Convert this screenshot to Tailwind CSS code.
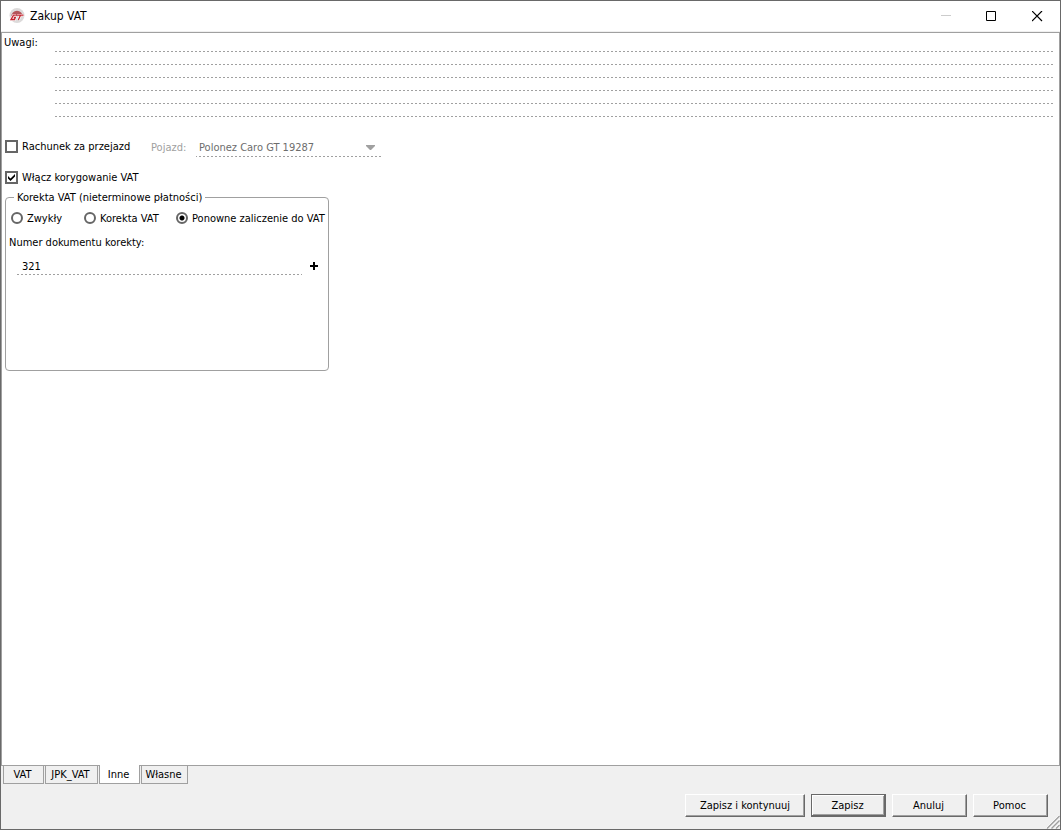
<!DOCTYPE html>
<html lang="pl">
<head>
  <meta charset="UTF-8" />
  <meta name="viewport" content="width=device-width, initial-scale=1.0"/>
  <title>Zakup VAT</title>
  <script src="https://cdn.jsdelivr.net/npm/@tailwindcss/browser@4"></script>
</head>
<body class="min-h-screen flex flex-col border border-[#696969] bg-[#f0f0f0] font-['Tahoma','DejaVu_Sans_Condensed','Roboto',sans-serif] text-[11px] leading-4 text-black">
  <!-- Title bar -->
  <header class="flex h-[30px] items-center bg-white pl-2">
    <svg class="size-4" viewBox="0 0 16 16" aria-hidden="true">
      <circle cx="8" cy="7.500" r="7.500" fill="#dcdada"/>
      <path d="M2.200 8.500a5.800 5.800 0 0 1 11.600 0z" fill="#b5555a"/>
      <path d="M6.800 7.200H4.500L2 11.500H5.500L6.300 9.500H4.800M8 7.200H14.500M11.500 7.200L9.300 12" fill="none" stroke="#fff" stroke-width="2.600"/>
      <path d="M6.800 7.200H4.500L2 11.500H5.500L6.300 9.500H4.800M8 7.200H14.500M11.500 7.200L9.300 12" fill="none" stroke="#c4242f" stroke-width="1.300"/>
    </svg>
    <h1 class="ml-[5px] flex-1 text-xs">Zakup VAT</h1>
    <button class="flex h-full w-[46px] items-center justify-center" aria-label="Minimalizuj" disabled>
      <svg class="size-[11px]" viewBox="0 0 11 11" stroke="#ccc"><path d="M1 4.500H11"/></svg>
    </button>
    <button class="flex h-full w-[46px] items-center justify-center" aria-label="Maksymalizuj">
      <svg class="size-[11px]" viewBox="0 0 11 11" fill="none" stroke="#000"><path d="M.5.5H9.500V9.500H.5z"/></svg>
    </button>
    <button class="flex h-full w-[46px] items-center justify-center" aria-label="Zamknij">
      <svg class="size-[11px]" viewBox="0 0 11 11" stroke="#000" stroke-width="1.200"><path d="M0 0l10 10M10 0l-10 10"/></svg>
    </button>
  </header>

  <!-- Tab page -->
  <main class="mt-px flex-1 border border-[#a0a0a0] bg-white pt-[3px]">
    <div class="flex pt-[3px] pr-[5px] pl-[2px]">
      <label for="uwagi" class="-mt-1 w-[51px]">Uwagi:</label>
      <textarea id="uwagi" rows="6" class="h-[78px] flex-1 resize-none bg-[linear-gradient(#fff_12px,transparent_12px),linear-gradient(90deg,#a0a0a0_2px,transparent_2px)] bg-size-[4px_13px] leading-[13px] outline-none"></textarea>
    </div>

    <div class="mt-[22px] flex h-[18px] items-start pl-[3px]">
      <label class="flex w-[146px] items-start gap-1">
        <input type="checkbox" class="mt-px size-[13px] appearance-none border-2 border-[#666] bg-white"/>
        Rachunek za przejazd
      </label>
      <label for="pojazd" class="w-[45px] pt-px text-[#a0a0a0]">Pojazd:</label>
      <div class="relative">
        <select id="pojazd" disabled class="h-[18px] w-[186px] appearance-none bg-[linear-gradient(90deg,#a0a0a0_2px,transparent_2px)] bg-size-[4px_1px] bg-bottom bg-repeat-x pl-[3px] text-[#6d6d6d] opacity-100">
          <option>Polonez Caro GT 19287</option>
        </select>
        <svg class="pointer-events-none absolute top-[6px] right-[7px] h-[5px] w-[9px]" viewBox="0 0 9 5" fill="#a0a0a0"><path d="M0 0H9V1L5 5H4L0 1z"/></svg>
      </div>
    </div>

    <label class="mt-[13px] ml-[3px] flex w-fit items-start gap-1">
      <span class="relative mt-px flex">
        <input type="checkbox" checked class="peer size-[13px] appearance-none border-2 border-[#666] bg-white"/>
        <svg class="pointer-events-none absolute top-[2px] left-[2px] hidden size-[9px] peer-checked:block" viewBox="0 0 9 9" fill="#000"><path d="M1 3l2.500 2.500L8 1v2.500L3.500 8 1 5.500z"/></svg>
      </span>
      Włącz korygowanie VAT
    </label>

    <fieldset class="mt-[2px] ml-[3px] h-[183px] w-[324px] min-w-0 rounded-[4px] border border-[#a0a0a0]">
      <legend class="ml-2 px-[3px] pt-[2px]">Korekta VAT (nieterminowe płatności)</legend>
      <div class="mt-[5px] flex pl-[5px]">
        <label class="flex w-[73px] shrink-0 items-start gap-1">
          <input type="radio" name="korekta" class="mt-px size-3 appearance-none rounded-full border-2 border-[#666] bg-white"/>
          Zwykły
        </label>
        <label class="flex w-[92px] shrink-0 items-start gap-1">
          <input type="radio" name="korekta" class="mt-px size-3 appearance-none rounded-full border-2 border-[#666] bg-white"/>
          Korekta VAT
        </label>
        <label class="flex items-start gap-1 whitespace-nowrap">
          <input type="radio" name="korekta" checked class="mt-px size-3 appearance-none rounded-full border-2 border-[#666] bg-white checked:bg-[radial-gradient(circle,#000_2px,transparent_3px)]"/>
          Ponowne zaliczenie do VAT
        </label>
      </div>
      <label for="numer" class="mt-2 ml-[3px] block">Numer dokumentu korekty:</label>
      <div class="mt-[6px] ml-[10px] flex items-start">
        <input id="numer" type="text" value="321" class="h-[18px] w-[286px] bg-[linear-gradient(90deg,#a0a0a0_2px,transparent_2px)] bg-size-[4px_1px] bg-bottom bg-repeat-x pl-[6px] outline-none"/>
        <button class="ml-2 flex h-[18px] w-2 items-center" aria-label="Dodaj">
          <svg class="size-2" viewBox="0 0 8 8" fill="#000"><path d="M3 0h2v3h3v2H5v3H3V5H0V3h3z"/></svg>
        </button>
      </div>
    </fieldset>
  </main>

  <!-- Tabs -->
  <nav class="-mt-px flex gap-px pl-[2px]">
    <a href="#vat" class="flex h-[19px] w-[41px] items-center justify-center border border-[#a0a0a0] pt-px pr-[2px]">VAT</a>
    <a href="#jpk" class="flex h-[19px] w-[53px] items-center justify-center border border-[#a0a0a0] pt-px pr-[2px]">JPK_VAT</a>
    <a href="#inne" class="flex h-[19px] w-[41px] items-center justify-center border border-t-0 border-[#a0a0a0] bg-white pt-[2px] pr-[2px]">Inne</a>
    <a href="#wlasne" class="flex h-[19px] w-[47px] items-center justify-center border border-[#a0a0a0] pt-px pr-[2px]">Własne</a>
  </nav>

  <!-- Buttons -->
  <footer class="relative flex h-[45px] items-start justify-end gap-[6px] pt-[10px] pr-3">
    <button class="h-[23px] w-[120px] border border-t-white border-r-[#696969] border-b-[#696969] border-l-white shadow-[inset_-1px_-1px_#a0a0a0]">Zapisz i kontynuuj</button>
    <button class="h-[23px] w-[75px] border border-[#696969] pr-[2px] shadow-[inset_-1px_-1px_#696969,inset_1px_1px_#fff,inset_-2px_-2px_#a0a0a0]">Zapisz</button>
    <button class="h-[23px] w-[75px] border border-t-white border-r-[#696969] border-b-[#696969] border-l-white pr-[2px] shadow-[inset_-1px_-1px_#a0a0a0]">Anuluj</button>
    <button class="h-[23px] w-[75px] border border-t-white border-r-[#696969] border-b-[#696969] border-l-white pr-[2px] shadow-[inset_-1px_-1px_#a0a0a0]">Pomoc</button>
    <svg class="absolute right-0 bottom-0 size-[14px]" viewBox="0 0 14 14" fill="none" aria-hidden="true">
      <path d="M0 13L13 0M4 13.500L13.500 4M8.500 13.500l5-5" stroke="#fff"/>
      <path d="M1 13.500L13.500 1M5.500 13.500l8-8M10 13.500l3.500-3.500" stroke="#a0a0a0" stroke-width="1.400"/>
    </svg>
  </footer>
</body>
</html>
